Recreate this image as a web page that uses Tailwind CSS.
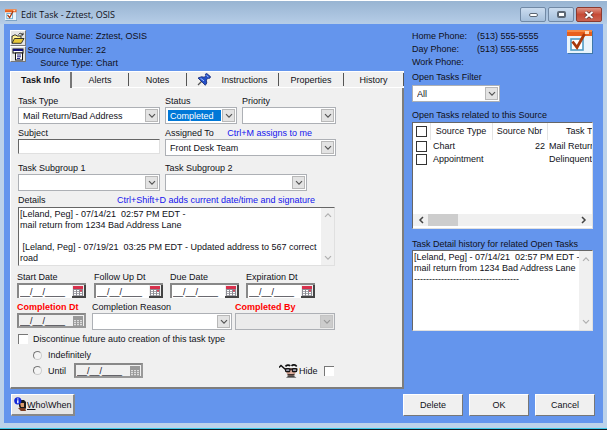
<!DOCTYPE html>
<html lang="en">
<head>
<meta charset="utf-8">
<title>Edit Task - Zztest, OSIS</title>
<script src="https://cdn.jsdelivr.net/npm/@tailwindcss/browser@4"></script>
</head>
<body class="min-h-screen flex flex-col bg-[#bcd2ea] font-['Liberation_Sans',Arial,sans-serif] text-[9px] leading-[12px] text-[#101018]">

<svg class="hidden" aria-hidden="true">
  <symbol id="task" viewBox="0 0 26 24">
    <rect x="1" y="1" width="25" height="23" fill="#3f78a8"/>
    <rect x="0" y="0" width="25" height="23" fill="#e9f4fb"/>
    <rect x="0" y="0" width="25" height="6" fill="#e8601c"/>
    <rect x="0" y="0" width="25" height="2" fill="#f58a45"/>
    <rect x="18" y="1" width="4" height="3" fill="#ffd9b8"/>
    <rect x="4" y="9" width="12" height="11" fill="#fff" stroke="#4f9cc4" stroke-width="1.6"/>
    <path d="M5.500 11.500l4.500 6L17.500 4" fill="none" stroke="#a8380c" stroke-width="2.800"/>
  </symbol>
  <symbol id="cal" viewBox="0 0 10 10">
    <rect x="0" y="0" width="10" height="10" fill="#8c8c94"/>
    <rect x="0" y="0" width="10" height="3" fill="#d8304c"/>
    <path d="M1 4h2v1.300H1zM4 4h2v1.300H4zM1 6h2v1.300H1zM4 6h2v1.300H4zM7 6h2v1.300H7zM1 8h2v1.300H1zM4 8h2v1.300H4zM7 8h2v1.300H7z" fill="#fff"/>
    <rect x="7" y="3.800" width="2" height="1.700" fill="#e0405a"/>
  </symbol>
  <symbol id="calgrey" viewBox="0 0 10 10">
    <rect x="0" y="0" width="10" height="10" fill="#999"/>
    <path d="M1 4h2v1.300H1zM4 4h2v1.300H4zM7 4h2v1.300H7zM1 6h2v1.300H1zM4 6h2v1.300H4zM7 6h2v1.300H7zM1 8h2v1.300H1zM4 8h2v1.300H4zM7 8h2v1.300H7z" fill="#ddd"/>
  </symbol>
  <symbol id="down" viewBox="0 0 8 6"><path d="M1 1.200l3 3 3-3" fill="none" stroke="currentColor" stroke-width="1.200"/></symbol>
  <symbol id="up" viewBox="0 0 8 6"><path d="M1 4.800l3-3 3 3" fill="none" stroke="currentColor" stroke-width="1.200"/></symbol>
</svg>

<header class="h-6 shrink-0 flex items-start justify-between border-t border-white bg-linear-to-b from-[#98b4d2] to-[#b6cde7] pl-[5px] pr-[5px]">
  <div class="flex items-center gap-1 pt-2">
    <svg class="w-3 h-3"><use href="#task"/></svg>
    <h1 class="font-['Open_Sans',sans-serif] text-[9px] leading-[12px]">Edit Task - Zztest, OSIS</h1>
  </div>
  <div class="flex gap-[2px] pt-[6px]">
    <button aria-label="Minimize" class="w-[26px] h-[15px] grid place-items-center border border-[#7189a5] rounded-xs bg-linear-to-b from-[#cbdcef] to-[#a5bfdb]"><span class="block w-[9px] h-1 border border-[#5b6673] rounded-xs bg-white"></span></button>
    <button aria-label="Maximize" class="w-[26px] h-[15px] grid place-items-center border border-[#7189a5] rounded-xs bg-linear-to-b from-[#cbdcef] to-[#a5bfdb]"><span class="block w-[9px] h-[7px] border-2 border-[#5b6673] rounded-xs bg-white"></span></button>
    <button aria-label="Close" class="w-[26px] h-[15px] grid place-items-center border border-[#8a3a30] rounded-xs bg-linear-to-b from-[#dd9385] via-[#c64a36] to-[#cc6350]"><svg class="w-[10px] h-2" viewBox="0 0 10 8"><path d="M1.500 1l7 6M8.500 1l-7 6" stroke="#5d302b" stroke-width="3.400"/><path d="M1.500 1l7 6M8.500 1l-7 6" stroke="#fff" stroke-width="2"/></svg></button>
  </div>
</header>

<main class="flex-1 flex flex-col mx-1 bg-[#6495ed] pl-[6px]">
  <div class="grid grid-cols-[394fr_181fr] gap-2 pr-[10px]">

    <section class="min-w-0">
      <div class="h-[47px] flex pt-[6px]">
        <div class="flex flex-col">
          <button aria-label="Open source" class="w-4 h-4 grid place-items-center bg-[#e4e4e4] border border-t-white border-l-white border-r-[#777] border-b-[#777]">
            <svg class="w-[14px] h-[13px]" viewBox="0 0 14 13"><path d="M1 11V4h1l1-1h2l1 1h4v2" fill="#fff29a" stroke="#222" stroke-width=".9"/><path d="M1 11.300L3.500 6.500h9.500L10.300 11.300z" fill="#e8c93a" stroke="#222" stroke-width=".9"/><path d="M7.500 2.500c1-1.600 3-1.600 4 .2M12 .8v2.200H9.800" fill="none" stroke="#111" stroke-width=".9"/></svg>
          </button>
          <button aria-label="Source details" class="w-4 h-4 grid place-items-center bg-[#e4e4e4] border border-t-white border-l-white border-r-[#777] border-b-[#777]">
            <svg class="w-[13px] h-[13px]" viewBox="0 0 13 13"><rect x="1" y="1" width="10" height="4" fill="#fff" stroke="#111"/><rect x="1" y="1" width="10" height="2" fill="#10107a"/><rect x="3.500" y="5" width="7" height="7" fill="#fff" stroke="#111"/><path d="M5 7h4M5 8.800h4M5 10.500h3" stroke="#10107a" stroke-width=".9"/></svg>
          </button>
        </div>
        <dl class="grid grid-cols-[67px_1fr] gap-x-[3px] leading-[13px]">
          <dt class="text-right whitespace-nowrap">Source Name:</dt><dd>Zztest, OSIS</dd>
          <dt class="text-right whitespace-nowrap">Source Number:</dt><dd>22</dd>
          <dt class="text-right whitespace-nowrap">Source Type:</dt><dd>Chart</dd>
        </dl>
      </div>

      <div role="tablist" class="h-[17px] flex bg-[#f0f0f0] border-t border-white">
        <button role="tab" aria-selected="true" class="flex-[59] font-bold border-l border-l-white border-r-2 border-r-[#777]">Task Info</button>
        <button role="tab" class="flex-[57] border-b border-white flex items-center"><span class="flex-1">Alerts</span><span class="w-px h-[13px] bg-[#555]"></span></button>
        <button role="tab" class="flex-[58] border-b border-white flex items-center"><span class="flex-1">Notes</span><span class="w-px h-[13px] bg-[#555]"></span></button>
        <button role="tab" class="flex-[82] border-b border-white flex items-center pl-[10px]">
          <svg class="w-[14px] h-[13px]" viewBox="0 0 14 13"><path d="M1 12l4-4" stroke="#555" stroke-width="1.200"/><path d="M1 5l3.500-1.300 2.700.5L9 2.500 8.300 1.300 9.500.3l4.200 3.500-1 1.500-1.700-.1L9.300 7l.5 3-1.500 2.300z" fill="#2450c8" stroke="#12246e" stroke-width=".8"/><path d="M3.500 5.300l3.500 2.500M9.500 2.500l2 1.500" stroke="#a8c4ff" stroke-width="1"/></svg>
          <span class="flex-1">Instructions</span><span class="w-px h-[13px] bg-[#555]"></span></button>
        <button role="tab" class="flex-[65] border-b border-white flex items-center"><span class="flex-1">Properties</span><span class="w-px h-[13px] bg-[#555]"></span></button>
        <button role="tab" class="flex-[60] border-b border-white flex items-center"><span class="flex-1">History</span><span class="w-px h-[13px] bg-[#555]"></span></button>
      </div>

      <form class="bg-[#f0f0f0] border-l border-l-white border-r-2 border-b-2 border-r-[#7d7d7d] border-b-[#7d7d7d] pl-[7px] pt-[7px] pb-[9px]">
        <div class="flex gap-[5px]">
          <div class="w-[142px]">
            <label for="type" class="block">Task Type</label>
            <div class="h-[17px] flex border border-[#adb0b5] bg-white p-px">
              <select id="type" class="appearance-none flex-1 min-w-0 pl-[3px] outline-none"><option>Mail Return/Bad Address</option></select>
              <span class="w-[13px] grid place-items-center border border-[#b8b8b8] bg-[#e3e3e3] text-[#555] pointer-events-none"><svg class="w-2 h-[6px]"><use href="#down"/></svg></span>
            </div>
          </div>
          <div class="w-[72px]">
            <label for="status" class="block">Status</label>
            <div class="h-[17px] flex gap-px border border-[#adb0b5] bg-white p-px">
              <select id="status" class="appearance-none flex-1 min-w-0 ml-px my-px pl-[2px] bg-[#0078d7] text-white outline-none"><option>Completed</option></select>
              <span class="w-[13px] grid place-items-center border border-[#b8b8b8] bg-[#e3e3e3] text-[#555] pointer-events-none"><svg class="w-2 h-[6px]"><use href="#down"/></svg></span>
            </div>
          </div>
          <div class="w-[94px]">
            <label for="priority" class="block">Priority</label>
            <div class="h-[17px] flex border border-[#adb0b5] bg-white p-px">
              <select id="priority" class="appearance-none flex-1 min-w-0 outline-none"><option></option></select>
              <span class="w-[13px] grid place-items-center border border-[#b8b8b8] bg-[#e3e3e3] text-[#555] pointer-events-none"><svg class="w-2 h-[6px]"><use href="#down"/></svg></span>
            </div>
          </div>
        </div>

        <div class="flex gap-[5px] mt-[3px]">
          <div class="w-[142px]">
            <label for="subject" class="block">Subject</label>
            <input id="subject" type="text" class="block w-full h-[15px] bg-white border border-t-[#666] border-l-[#666] border-r-[#e0e0e0] border-b-[#e0e0e0] outline-none">
          </div>
          <div class="w-[171px]">
            <div class="flex justify-between pr-6"><label for="assigned">Assigned To</label><span class="text-[#1414ee]">Ctrl+M assigns to me</span></div>
            <div class="h-[17px] flex border border-[#adb0b5] bg-white p-px">
              <select id="assigned" class="appearance-none flex-1 min-w-0 pl-[3px] outline-none"><option>Front Desk Team</option></select>
              <span class="w-[13px] grid place-items-center border border-[#b8b8b8] bg-[#e3e3e3] text-[#555] pointer-events-none"><svg class="w-2 h-[6px]"><use href="#down"/></svg></span>
            </div>
          </div>
        </div>

        <div class="flex gap-[5px] mt-[6px]">
          <div class="w-[142px]">
            <label for="sub1" class="block">Task Subgroup 1</label>
            <div class="h-[17px] flex border border-[#adb0b5] bg-white p-px">
              <select id="sub1" class="appearance-none flex-1 min-w-0 outline-none"><option></option></select>
              <span class="w-[13px] grid place-items-center border border-[#b8b8b8] bg-[#e3e3e3] text-[#555] pointer-events-none"><svg class="w-2 h-[6px]"><use href="#down"/></svg></span>
            </div>
          </div>
          <div class="w-[142px]">
            <label for="sub2" class="block">Task Subgroup 2</label>
            <div class="h-[17px] flex border border-[#adb0b5] bg-white p-px">
              <select id="sub2" class="appearance-none flex-1 min-w-0 outline-none"><option></option></select>
              <span class="w-[13px] grid place-items-center border border-[#b8b8b8] bg-[#e3e3e3] text-[#555] pointer-events-none"><svg class="w-2 h-[6px]"><use href="#down"/></svg></span>
            </div>
          </div>
        </div>

        <div class="w-[317px] mt-[3px]">
          <div class="flex justify-between pr-5"><label for="details">Details</label><span class="text-[#1414ee]">Ctrl+Shift+D adds current date/time and signature</span></div>
          <div class="h-[59px] mt-px flex bg-white border border-t-[#666] border-l-[#666] border-r-[#e0e0e0] border-b-[#e0e0e0]">
            <textarea id="details" class="flex-1 min-w-0 resize-none overflow-hidden outline-none leading-[11px] pt-px pl-px">[Leland, Peg] - 07/14/21  02:57 PM EDT -
mail return from 1234 Bad Address Lane

 [Leland, Peg] - 07/19/21  03:25 PM EDT - Updated address to 567 correct road</textarea>
            <div class="w-[13px] bg-[#f0f0f0] text-[#b0b0b0] flex flex-col justify-between items-center py-1"><svg class="w-2 h-[6px]"><use href="#up"/></svg><svg class="w-2 h-[6px]"><use href="#down"/></svg></div>
          </div>
        </div>

        <div class="flex gap-[7px] mt-[5px] -ml-px">
          <div class="w-[69px]"><label for="start" class="block">Start Date</label>
            <div class="h-[15px] flex bg-white border-t-2 border-l-2 border-t-[#888] border-l-[#888]"><input id="start" type="text" value="__/__/____" class="flex-1 min-w-0 pl-px outline-none"><button type="button" aria-label="Pick start date" class="w-[14px] grid place-items-center bg-[#eee] border-r-2 border-b-2 border-[#444]"><svg class="w-[10px] h-[10px]"><use href="#cal"/></svg></button></div></div>
          <div class="w-[69px] ml-px"><label for="follow" class="block">Follow Up Dt</label>
            <div class="h-[15px] flex bg-white border-t-2 border-l-2 border-t-[#888] border-l-[#888]"><input id="follow" type="text" value="__/__/____" class="flex-1 min-w-0 pl-px outline-none"><button type="button" aria-label="Pick follow up date" class="w-[14px] grid place-items-center bg-[#eee] border-r-2 border-b-2 border-[#444]"><svg class="w-[10px] h-[10px]"><use href="#cal"/></svg></button></div></div>
          <div class="w-[69px]"><label for="due" class="block">Due Date</label>
            <div class="h-[15px] flex bg-white border-t-2 border-l-2 border-t-[#888] border-l-[#888]"><input id="due" type="text" value="__/__/____" class="flex-1 min-w-0 pl-px outline-none"><button type="button" aria-label="Pick due date" class="w-[14px] grid place-items-center bg-[#eee] border-r-2 border-b-2 border-[#444]"><svg class="w-[10px] h-[10px]"><use href="#cal"/></svg></button></div></div>
          <div class="w-[69px]"><label for="exp" class="block">Expiration Dt</label>
            <div class="h-[15px] flex bg-white border-t-2 border-l-2 border-t-[#888] border-l-[#888]"><input id="exp" type="text" value="__/__/____" class="flex-1 min-w-0 pl-px outline-none"><button type="button" aria-label="Pick expiration date" class="w-[14px] grid place-items-center bg-[#eee] border-r-2 border-b-2 border-[#444]"><svg class="w-[10px] h-[10px]"><use href="#cal"/></svg></button></div></div>
        </div>

        <div class="flex mt-[3px] -ml-px">
          <div class="w-[69px] mr-[6px]"><label for="comp" class="block font-bold text-[#f00] whitespace-nowrap">Completion Dt</label>
            <div class="h-[15px] flex bg-[#f0f0f0] border-2 border-t-[#888] border-l-[#888] border-r-[#999] border-b-[#999]"><input id="comp" type="text" value="__/__/____" disabled class="flex-1 min-w-0 pl-px outline-none"><button type="button" aria-label="Pick completion date" disabled class="w-3 grid place-items-center"><svg class="w-[10px] h-[10px]"><use href="#calgrey"/></svg></button></div></div>
          <div class="w-[140px] mr-[3px]"><label for="reason" class="block">Completion Reason</label>
            <div class="h-[17px] flex border border-[#adb0b5] bg-white p-px">
              <select id="reason" class="appearance-none flex-1 min-w-0 outline-none"><option></option></select>
              <span class="w-[13px] grid place-items-center border border-[#b8b8b8] bg-[#e3e3e3] text-[#555] pointer-events-none"><svg class="w-2 h-[6px]"><use href="#down"/></svg></span>
            </div></div>
          <div class="w-[100px]"><label for="by" class="block font-bold text-[#f00]">Completed By</label>
            <div class="h-[17px] flex border border-[#adb0b5] bg-[#ebebeb] p-px">
              <select id="by" disabled class="appearance-none flex-1 min-w-0 outline-none"><option></option></select>
              <span class="w-[13px] grid place-items-center border border-[#c4c4c4] bg-[#ccc] text-[#999] pointer-events-none"><svg class="w-2 h-[6px]"><use href="#down"/></svg></span>
            </div></div>
        </div>

        <div class="flex items-center gap-[5px] mt-[3px]">
          <input id="disc" type="checkbox" class="appearance-none w-[10px] h-[10px] bg-white border-t border-l border-[#777]">
          <label for="disc">Discontinue future auto creation of this task type</label>
        </div>
        <div class="flex items-center gap-[6px] mt-1 ml-[15px]">
          <input id="indef" name="until" type="radio" class="appearance-none w-[9px] h-[9px] rounded-full bg-[#f4f4f4] border border-t-[#777] border-l-[#777] border-r-[#ccc] border-b-[#ccc]">
          <label for="indef">Indefinitely</label>
        </div>
        <div class="flex items-center mt-[2px] ml-[15px]">
          <input id="untilr" name="until" type="radio" class="appearance-none w-[9px] h-[9px] mr-[6px] rounded-full bg-[#f4f4f4] border border-t-[#777] border-l-[#777] border-r-[#ccc] border-b-[#ccc]">
          <label for="untilr" class="w-[26px]">Until</label>
          <div class="w-[69px] h-[15px] flex bg-[#f0f0f0] border-2 border-t-[#888] border-l-[#888] border-r-[#999] border-b-[#999]"><input aria-label="Until date" type="text" value="__/__/____" disabled class="flex-1 min-w-0 pl-px outline-none"><button type="button" aria-label="Pick until date" disabled class="w-3 grid place-items-center"><svg class="w-[10px] h-[10px]"><use href="#calgrey"/></svg></button></div>
          <div class="flex items-center ml-[136px]">
            <svg class="w-[19px] h-[14px] mr-px" viewBox="0 0 19 14"><path d="M6 4h12l-2 6-2 2H9.500L7.500 9z" fill="#c99a8a"/><path d="M0 3.500L2 1.500l4.500 4" fill="none" stroke="#111" stroke-width="1.500"/><path d="M6.500 2.500c1-1.700 3.500-1.900 4.700-.6M12.500 1.900c1.500-1.500 3.800-1.200 5.200.6" fill="none" stroke="#111" stroke-width="1.700"/><path d="M6 4.500h12.500v1.200H6z" fill="#111"/><rect x="6.500" y="4.700" width="4.500" height="3" rx="1.300" fill="#99a" stroke="#111" stroke-width="1.200"/><rect x="13.300" y="4.700" width="4.500" height="3" rx="1.300" fill="#99a" stroke="#111" stroke-width="1.200"/><path d="M12 6l-1.500 4h3.500z" fill="#e0b0a0"/><path d="M8.500 10.300h7v1.200h-7zM7 13.500l2-1.200h6l2.500 1.200z" fill="#111"/></svg>
            <label for="hide">Hide</label>
            <input id="hide" type="checkbox" class="appearance-none w-[10px] h-[10px] ml-[6px] bg-white border-t border-l border-[#777]">
          </div>
        </div>
      </form>
    </section>

    <section class="min-w-0">
      <div class="h-[47px] pt-[6px] flex justify-between items-start">
        <dl class="grid grid-cols-[65px_auto] leading-[13px] whitespace-nowrap">
          <dt>Home Phone:</dt><dd>(513) 555-5555</dd>
          <dt>Day Phone:</dt><dd>(513) 555-5555</dd>
          <dt>Work Phone:</dt><dd></dd>
        </dl>
        <svg class="w-[26px] h-6"><use href="#task"/></svg>
      </div>
      <label for="filter" class="block">Open Tasks Filter</label>
      <div class="w-[88px] h-[17px] mt-[2px] flex border border-[#adb0b5] bg-white p-px">
        <select id="filter" class="appearance-none flex-1 min-w-0 pl-[3px] outline-none"><option>All</option></select>
        <span class="w-[13px] grid place-items-center border border-[#b8b8b8] bg-[#e3e3e3] text-[#555] pointer-events-none"><svg class="w-2 h-[6px]"><use href="#down"/></svg></span>
      </div>
      <h2 class="mt-[7px]">Open Tasks related to this Source</h2>
      <div class="h-[107px] mt-px flex flex-col overflow-hidden bg-white border border-t-[#666] border-l-[#666] border-r-[#e0e0e0] border-b-[#e0e0e0]">
        <div class="flex-1 overflow-hidden">
          <table class="table-fixed w-[212px] whitespace-nowrap leading-[13px]">
            <colgroup><col class="w-[17px]"><col class="w-[62px]"><col class="w-[55px]"><col class="w-[78px]"></colgroup>
            <thead><tr class="h-[17px]">
              <th class="border-r border-[#e4e4e4]"><input type="checkbox" aria-label="Select all" class="block mx-auto appearance-none w-[11px] h-[11px] bg-white border border-[#333]"></th>
              <th class="font-normal border-r border-[#e4e4e4]">Source Type</th>
              <th class="font-normal border-r border-[#e4e4e4]">Source Nbr</th>
              <th class="font-normal">Task Type</th></tr></thead>
            <tbody>
              <tr><td><input type="checkbox" aria-label="Select Chart" class="block mx-auto appearance-none w-[11px] h-[11px] bg-white border border-[#333]"></td><td class="pl-[3px]">Chart</td><td class="text-right pr-[2px]">22</td><td class="pl-[2px]">Mail Return</td></tr>
              <tr><td><input type="checkbox" aria-label="Select Appointment" class="block mx-auto appearance-none w-[11px] h-[11px] bg-white border border-[#333]"></td><td class="pl-[3px]">Appointment</td><td></td><td class="pl-[2px]">Delinquent</td></tr>
            </tbody>
          </table>
        </div>
        <div class="h-3 mb-[2px] flex items-center justify-between bg-[#f0f0f0] px-[5px] text-[#444]">
          <div class="flex items-center gap-1 h-full"><svg class="w-[6px] h-2" viewBox="0 0 6 8"><path d="M5 1L2 4l3 3" fill="none" stroke="currentColor" stroke-width="1.500"/></svg><span class="block w-[30px] h-full bg-[#cdcdcd]"></span></div>
          <svg class="w-[6px] h-2" viewBox="0 0 6 8"><path d="M1 1l3 3-3 3" fill="none" stroke="currentColor" stroke-width="1.500"/></svg>
        </div>
      </div>
      <label for="hist" class="block mt-[9px] whitespace-nowrap">Task Detail history for related Open Tasks</label>
      <div class="h-[81px] flex bg-white border border-t-[#666] border-l-[#666] border-r-[#e0e0e0] border-b-[#e0e0e0]">
        <textarea id="hist" class="flex-1 min-w-0 resize-none overflow-hidden whitespace-pre outline-none leading-[11px] pt-px pl-px">[Leland, Peg] - 07/14/21  02:57 PM EDT -
mail return from 1234 Bad Address Lane
-----------------------------------</textarea>
        <div class="w-[13px] bg-[#f0f0f0] text-[#b0b0b0] flex flex-col justify-between items-center py-[5px]"><svg class="w-2 h-[6px]"><use href="#up"/></svg><svg class="w-2 h-[6px]"><use href="#down"/></svg></div>
      </div>
    </section>
  </div>

  <footer class="flex justify-between pl-px pr-2 pt-[5px] pb-[7px]">
    <button class="w-16 h-[22px] flex items-center pl-[2px] bg-[#e6e6e6] border border-t-white border-l-white border-r-2 border-b-2 border-r-[#888] border-b-[#888] whitespace-nowrap">
      <svg class="w-[13px] h-[15px] shrink-0" viewBox="0 0 13 15"><path d="M5 3h5l2 2v6l-2 3H7L5 9z" fill="#1a1a1a"/><path d="M6 6h4v4H7z" fill="#d99a6c"/><path d="M4 11l3 3h5l-1-3z" fill="#7a3a20"/><circle cx="3.800" cy="3.800" r="3.600" fill="#1228d8"/><path d="M3.800 1.500v1M3.800 3.300v3" stroke="#fff" stroke-width="1.400"/></svg>
      <span><u>W</u>ho\When</span>
    </button>
    <div class="flex gap-[6px]">
      <button class="w-[60px] h-[22px] bg-[#f0f0f0] border border-t-white border-l-white border-r-[#777] border-b-[#777]">Delete</button>
      <button class="w-[60px] h-[22px] bg-[#f0f0f0] border border-t-white border-l-white border-r-[#777] border-b-[#777]">OK</button>
      <button class="w-[60px] h-[22px] bg-[#f0f0f0] border border-t-white border-l-white border-r-[#777] border-b-[#777]">Cancel</button>
    </div>
  </footer>
</main>
<div class="h-[7px] shrink-0 border-b border-[#101820]"><div class="h-[6px] border-b border-[#3cc8e8]"></div></div>
</body>
</html>
